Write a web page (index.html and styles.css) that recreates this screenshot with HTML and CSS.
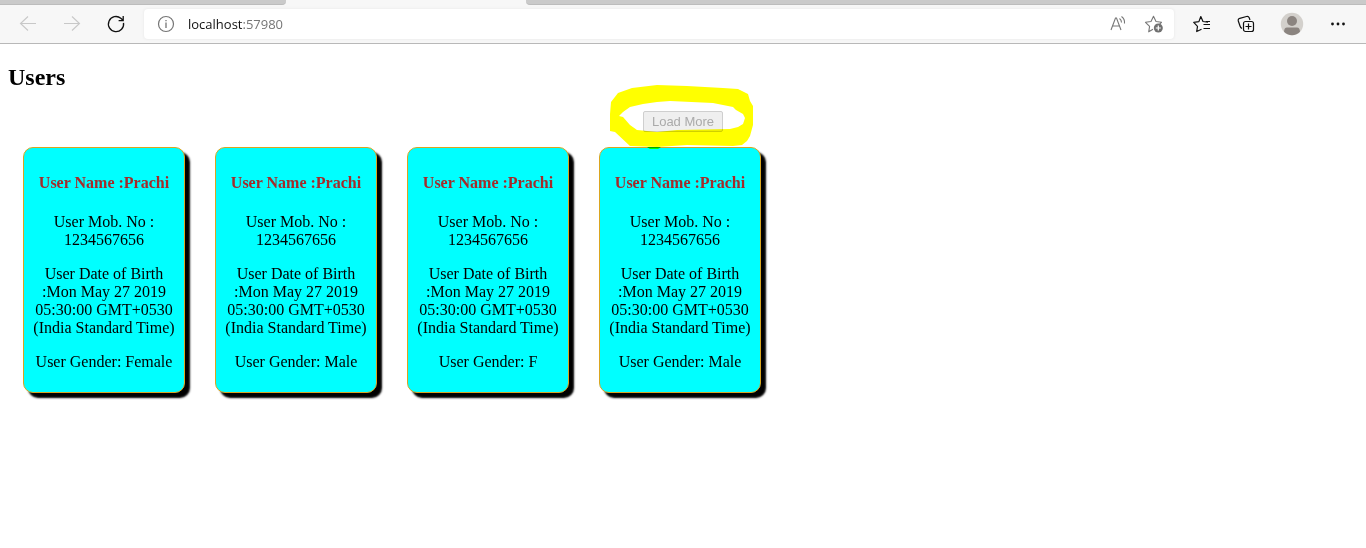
FILE: index.html
```html
<!DOCTYPE html>
<html lang="en">
<head>
<meta charset="utf-8">
<title>Users</title>
<link rel="stylesheet" href="styles.css">
</head>
<body>
<header class="browser">
  <div class="tabstrip">
    <div class="tabs-left"></div>
    <div class="tab-active"></div>
    <div class="tabs-right"></div>
  </div>
  <div class="toolbar">
    <nav class="nav" aria-label="Navigation">
      <button class="icon-btn" type="button" aria-label="Back" disabled>
        <svg width="20" height="20" viewBox="0 0 20 20" fill="none" stroke="#c8c8c8" stroke-width="1.1"><path d="M18 9.500H2.500M10 2.500L2.500 9.500l7.500 7"/></svg>
      </button>
      <button class="icon-btn" type="button" aria-label="Forward" disabled>
        <svg width="20" height="20" viewBox="0 0 20 20" fill="none" stroke="#c8c8c8" stroke-width="1.1"><path d="M2 9.500h15.500M10 2.500l7.500 7-7.500 7"/></svg>
      </button>
      <button class="icon-btn" type="button" aria-label="Refresh">
        <svg width="20" height="20" viewBox="0 0 20 20" fill="none" stroke="#111" stroke-width="1.3"><path d="M17.500 8.800A7.600 7.600 0 1 1 14.800 4.200L17 6.200M17.200 2v4.600h-4.600"/></svg>
      </button>
    </nav>
    <div class="address">
      <svg width="20" height="20" viewBox="0 0 20 20" fill="none" stroke="#757575"><circle cx="10" cy="10" r="7.500" stroke-width="1.200"/><path d="M10 8.500v5.500M10 6v1.300" stroke-width="1.300"/></svg>
      <div class="url">localhost<span class="port">:57980</span></div>
      <button class="icon-btn" type="button" aria-label="Read aloud">
        <svg width="20" height="20" viewBox="0 0 20 20" fill="none" stroke="#777" stroke-width="1.100"><path d="M3 16L7.500 4h1L13 16M4.500 12h7M11.500 4.500q2 1.500 2 4M13.500 2.500q3.500 2.500 3 7"/></svg>
      </button>
      <button class="icon-btn" type="button" aria-label="Add to favorites">
        <svg width="20" height="20" viewBox="0 0 20 20" fill="none" stroke="#777" stroke-width="1.100" stroke-linejoin="round"><path d="M9 15.200L4.700 17.800l.9-5.500L1.500 8.300l5.500-.8L9.500 2.300 12 7.500l5.500.8-1.800 1.700"/><circle cx="14.300" cy="14" r="4.500" fill="#707070" stroke="none"/><path d="M14.300 11.500v5M11.800 14h5" stroke="#fff" stroke-width="1.200"/></svg>
      </button>
    </div>
    <div class="actions">
      <button class="icon-btn" type="button" aria-label="Favorites">
        <svg width="20" height="20" viewBox="0 0 20 20" fill="none" stroke="#111" stroke-width="1.200" stroke-linejoin="round"><path d="M9.500 15.200L4.700 17.500l.8-5.200L1.700 8.400l5.200-.8L8.800 2.500l2.200 5 5 .6M11.500 10.500H18M11.500 14.500H18M14 7.500h4"/></svg>
      </button>
      <button class="icon-btn" type="button" aria-label="Collections">
        <svg width="20" height="20" viewBox="0 0 20 20" fill="none" stroke="#111" stroke-width="1.200"><rect x="7.500" y="7.500" width="10" height="10" rx="2"/><path d="M12.500 9.500v6M9.500 12.500h6M6 14.500Q4.500 13.800 4 12L2.300 7Q1.800 5 3.800 4.300L10.500 2.500Q12.500 2 13.200 3.800L14 6"/></svg>
      </button>
      <button class="icon-btn profile" type="button" aria-label="Profile">
        <svg width="24" height="24" viewBox="0 0 24 24"><circle cx="12" cy="12" r="11.200" fill="#d3d0cc"/><circle cx="12" cy="9" r="5" fill="#8b8480"/><path d="M4 19.800Q4.200 15.500 7 15.500h10q2.800 0 3 4.300a11.200 11.200 0 0 1-16 0z" fill="#8b8480"/></svg>
      </button>
      <button class="icon-btn" type="button" aria-label="Settings and more">
        <svg width="20" height="20" viewBox="0 0 20 20" fill="#111"><circle cx="4.500" cy="10" r="1.400"/><circle cx="10" cy="10" r="1.400"/><circle cx="15.500" cy="10" r="1.400"/></svg>
      </button>
    </div>
  </div>
</header>
<main class="page">
  <h2 class="title">Users</h2>
  <div class="load">
    <button class="load-more" type="button" disabled>Load More</button>
    <svg class="marker" width="150" height="70" viewBox="0 0 150 70" aria-hidden="true">
      <path fill="#ff0" fill-rule="evenodd" d="M4 30L5 18L12 9L26 4L51 1L81 2L117 4L132 5L142 10L144 17L147 22V41L144 52L141 57L136 61L127 62L81 61L51 63L24 62L9 48L4 47zM13 32L17 28L24 23L37 20L51 18L64 17L107 19L127 23L130 26L137 30L139 34L137 40L132 43L124 45L71 46L51 48L31 46L24 41L17 33z"/>
      <path fill="#0f0" d="M41 63h14l-3 2H44z"/>
    </svg>
  </div>
  <section class="cards">
    <article class="card">
      <h4 class="name">User Name :Prachi</h4>
      <p class="line">User Mob. No : 1234567656</p>
      <p class="line">User Date of Birth :Mon May 27 2019 05:30:00 GMT+0530 (India Standard Time)</p>
      <p class="line">User Gender: Female</p>
    </article>
    <article class="card">
      <h4 class="name">User Name :Prachi</h4>
      <p class="line">User Mob. No : 1234567656</p>
      <p class="line">User Date of Birth :Mon May 27 2019 05:30:00 GMT+0530 (India Standard Time)</p>
      <p class="line">User Gender: Male</p>
    </article>
    <article class="card">
      <h4 class="name">User Name :Prachi</h4>
      <p class="line">User Mob. No : 1234567656</p>
      <p class="line">User Date of Birth :Mon May 27 2019 05:30:00 GMT+0530 (India Standard Time)</p>
      <p class="line">User Gender: F</p>
    </article>
    <article class="card">
      <h4 class="name">User Name :Prachi</h4>
      <p class="line">User Mob. No : 1234567656</p>
      <p class="line">User Date of Birth :Mon May 27 2019 05:30:00 GMT+0530 (India Standard Time)</p>
      <p class="line">User Gender: Male</p>
    </article>
  </section>
</main>
</body>
</html>
```
FILE: styles.css
```css
* { box-sizing: border-box; }

body {
  margin: 0;
  background: #fff;
  color: #000;
  font-family: "Liberation Serif", "Times New Roman", serif;
  font-size: 16px;
  line-height: 18px;
}

.browser {
  background: #f7f7f7;
  border-bottom: 1px solid #b8b8b8;
  font-family: "Open Sans", "Noto Sans", sans-serif;
}

.tabstrip { display: flex; height: 5px; }
.tabs-left, .tabs-right {
  background: #cacaca;
  border-bottom: 1px solid #bcbcbc;
}
.tabs-left { flex: 0 0 286px; border-bottom-right-radius: 4px; }
.tab-active { flex: 0 0 240px; }
.tabs-right { flex: 1; border-bottom-left-radius: 4px; }

.toolbar {
  display: flex;
  align-items: center;
  height: 38px;
  padding: 0 18px;
}

.nav { display: flex; gap: 24px; margin-right: 18px; }

.icon-btn {
  display: flex;
  padding: 0;
  border: 0;
  background: none;
}

.address {
  display: flex;
  flex: 1;
  align-items: center;
  height: 30px;
  padding: 0 10px 0 12px;
  gap: 16px;
  background: #fff;
  border-radius: 4px;
  box-shadow: 0 0 3px #e4e4e4;
}

.url { flex: 1; margin-left: -4px; font-size: 13px; color: #111; }
.port { color: #767676; }

.actions { display: flex; align-items: center; gap: 24px; margin-left: 18px; }

.page { padding: 20px 8px; }

.title {
  margin: 0 0 20px;
  font-size: 24px;
  line-height: 27px;
}

.load {
  position: relative;
  display: flex;
  justify-content: center;
  margin-bottom: 15px;
}

.load-more {
  height: 21px;
  padding: 0 8px;
  border: 1px solid #cfcfcf;
  border-radius: 2px;
  background: #efefef;
  color: #aaa;
  font: 13px/19px "Liberation Sans", Arial, sans-serif;
}

/* hand-drawn highlight round the button */
.marker {
  position: absolute;
  left: 50%;
  top: -27px;
  z-index: 1;
  margin-left: -77px;
  mix-blend-mode: multiply;
  pointer-events: none;
}

.cards {
  display: flex;
  flex-wrap: wrap;
  gap: 30px;
  padding: 0 15px;
}

.card {
  width: 162px;
  padding: 21px 5px;
  border: 1px solid goldenrod;
  border-radius: 10px;
  background: cyan;
  box-shadow: 5px 5px 2px #000;
  text-align: center;
}

.name { margin: 5px 0 21px; color: brown; font-size: 16px; }
.line { margin: 0 0 16px; }
.line:last-child { margin-bottom: 0; }
```
